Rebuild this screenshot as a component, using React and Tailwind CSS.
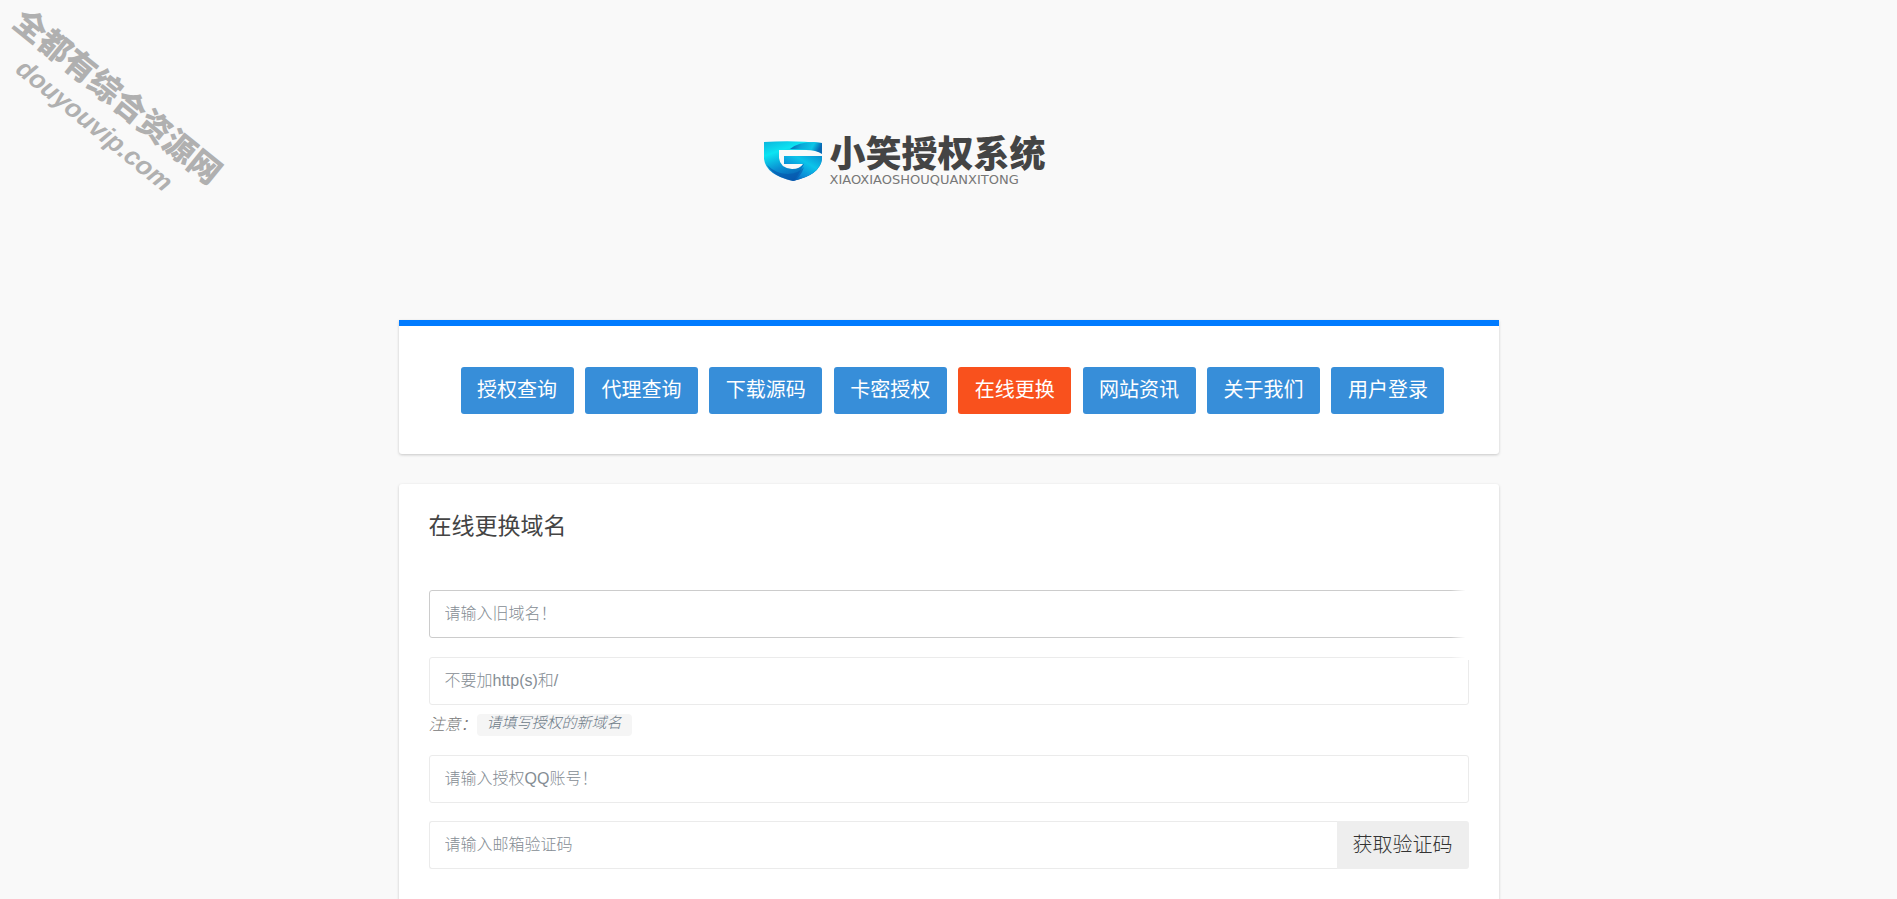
import React, { useState } from 'react';

const navItems = [
  { label: '授权查询', href: '#query' },
  { label: '代理查询', href: '#agent' },
  { label: '下载源码', href: '#download' },
  { label: '卡密授权', href: '#card' },
  { label: '在线更换', href: '#change', active: true },
  { label: '网站资讯', href: '#news' },
  { label: '关于我们', href: '#about' },
  { label: '用户登录', href: '#login' },
];

const inputClass =
  'block w-full h-12 px-[15px] rounded-[3px] border bg-white text-base font-light text-[#444] placeholder:text-[#858d94] outline-none';

const Watermark = () => (
  <div className="absolute left-[-22px] top-[75px] w-64 rotate-39 text-center font-bold text-[#b0b0b0] pointer-events-none">
    <p className="text-[32px] leading-9 whitespace-nowrap font-black">全都有综合资源网</p>
    <p className="text-[26px] leading-9 italic">douyouvip.com</p>
  </div>
);

const Logo = () => (
  <a href="#home" className="flex items-start gap-2 w-[370px] mx-auto">
    <svg viewBox="0 0 58 40" className="w-[58px] h-10 mt-[5px] shrink-0" aria-hidden="true">
      <defs>
        <linearGradient id="shieldBase" x1="0" y1="0" x2="0.5" y2="1">
          <stop offset="0" stopColor="#0bb4dc" />
          <stop offset="0.3" stopColor="#0ce4f2" />
          <stop offset="0.65" stopColor="#0a8fd2" />
          <stop offset="1" stopColor="#0758ac" />
        </linearGradient>
        <linearGradient id="shieldTop" x1="0" y1="0" x2="1" y2="0.2">
          <stop offset="0" stopColor="#0757a8" />
          <stop offset="0.4" stopColor="#0aa8d8" />
          <stop offset="0.75" stopColor="#0bc6e6" />
          <stop offset="1" stopColor="#0768b4" />
        </linearGradient>
        <linearGradient id="shieldRight" x1="1" y1="0" x2="0.1" y2="1">
          <stop offset="0" stopColor="#0a8fd0" />
          <stop offset="0.35" stopColor="#0bc4ea" />
          <stop offset="0.7" stopColor="#0a8ad6" />
          <stop offset="1" stopColor="#073f9b" />
        </linearGradient>
      </defs>
      <path d="M0 1 Q29 -1 58 2 L58 18 Q56 34 29 40 Q2 34 0 18 Z" fill="url(#shieldBase)" />
      <path d="M26 8 Q34 1 50 1 L58 2 L58 13 L44 8 Z" fill="url(#shieldTop)" />
      <path d="M20 15 L58 15 L58 18 Q56 34 29 40 Q35 34 40 23 L20 23 Z" fill="url(#shieldRight)" />
      <path d="M3 24 Q12 33 24 33 Q34 33 40 26 Q37 36 29 40 Q10 36 3 24 Z" fill="#0757ae" opacity="0.6" />
      <path d="M15 9 L42 9 Q52 9 58 13 L58 15 L20 15 L20 23 L39 23 Q36 28 28 28 Q16 27 15 17 Z" fill="#f9f9f9" />
    </svg>
    <span className="flex flex-col text-[#444]">
      <span className="text-[36px] leading-[38px] font-black whitespace-nowrap">小笑授权系统</span>
      <span className="font-['DejaVu_Sans'] text-[13px] leading-3 text-[#777]">XIAOXIAOSHOUQUANXITONG</span>
    </span>
  </a>
);

export default function App() {
  const [form, setForm] = useState({ oldDomain: '', newDomain: '', qq: '', code: '' });

  const handleChange = (e) => {
    setForm({ ...form, [e.target.name]: e.target.value });
  };

  return (
    <div className="relative min-h-screen overflow-x-hidden bg-[#f9f9f9] text-[#444] font-['Liberation_Sans','Noto_Sans_CJK_SC',sans-serif]">
      <Watermark />

      <header className="h-80 pt-[136px]">
        <Logo />
      </header>

      <main className="w-full max-w-[1100px] mx-auto">
        <nav className="border-t-6 border-[#007bff] bg-white rounded-b-[3px] shadow-[0_1px_3px_rgba(0,0,0,0.2)] pt-[41px] pb-10 pl-[62px] pr-[54px] flex flex-wrap justify-between gap-y-3">
          {navItems.map((item) => (
            <a
              key={item.label}
              href={item.href}
              className={`w-[113px] h-[47px] rounded-[3px] text-center text-xl leading-[47px] text-white ${
                item.active ? 'bg-[#f9511d]' : 'bg-[#378ed9]'
              }`}
            >
              {item.label}
            </a>
          ))}
        </nav>

        <section className="relative mt-[30px] bg-white rounded-[3px] shadow-[0_1px_3px_rgba(0,0,0,0.2)] px-[30px] pt-[26px] pb-10">
          <h1 className="text-[23px] leading-8 mb-12">在线更换域名</h1>

          <form onSubmit={(e) => e.preventDefault()}>
            <input
              type="text"
              name="oldDomain"
              aria-label="旧域名"
              placeholder="请输入旧域名！"
              value={form.oldDomain}
              onChange={handleChange}
              className={`${inputClass} border-[#ccc]`}
            />
            <input
              type="text"
              name="newDomain"
              aria-label="新域名"
              placeholder="不要加http(s)和/"
              value={form.newDomain}
              onChange={handleChange}
              className={`${inputClass} mt-[19px] border-[#ebebeb]`}
            />
            <p className="mt-2 flex items-center leading-6 text-base italic font-light text-[#777]">
              注意：
              <code className="h-[22px] px-[10px] rounded-[4px] bg-[#f5f5f5] text-[15px] leading-[22px] text-[#6c7a87] font-['Liberation_Mono','Noto_Sans_CJK_SC',monospace]">
                请填写授权的新域名
              </code>
            </p>
            <input
              type="text"
              name="qq"
              aria-label="授权QQ账号"
              placeholder="请输入授权QQ账号！"
              value={form.qq}
              onChange={handleChange}
              className={`${inputClass} mt-[18px] border-[#ebebeb]`}
            />
            <div className="mt-[18px] flex">
              <input
                type="text"
                name="code"
                aria-label="邮箱验证码"
                placeholder="请输入邮箱验证码"
                value={form.code}
                onChange={handleChange}
                className={`${inputClass} flex-1 min-w-0 rounded-r-none border-r-0 border-[#ebebeb]`}
              />
              <button type="button" className="h-12 px-4 rounded-r-[3px] bg-[#eee] text-xl font-light text-[#333]">
                获取验证码
              </button>
            </div>
          </form>

          {/* soft fade over the right end of the first field */}
          <div className="absolute right-0 top-24 w-12 h-20 bg-linear-to-r from-transparent to-white to-30% pointer-events-none" />
        </section>
      </main>
    </div>
  );
}
